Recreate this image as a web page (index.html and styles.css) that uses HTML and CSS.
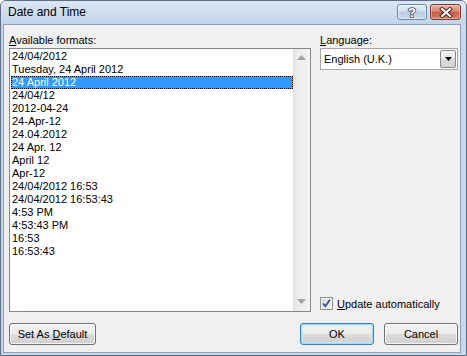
FILE: index.html
```html
<!DOCTYPE html>
<html lang="en">
  <head>
    <meta charset="UTF-8" />
    <title>Date and Time</title>
    <link rel="stylesheet" href="styles.css">
  </head>
  <body>
    <div class="window">
      <div class="titlebar">
        <span class="title">Date and Time</span>
        <div class="caption-buttons">
          <div class="cap-btn help">
            <svg width="12" height="14" viewBox="0 0 12 14">
              <text x="6" y="11.5" text-anchor="middle" class="help-glyph">?</text>
            </svg>
          </div>
          <div class="cap-btn close">
            <svg width="14" height="11" viewBox="0 0 14 11">
              <path d="M3 2 L11 9 M11 2 L3 9" stroke="#4b2a25" stroke-width="4" stroke-linecap="square" />
              <path d="M3 2 L11 9 M11 2 L3 9" stroke="#fff" stroke-width="2" stroke-linecap="square" />
            </svg>
          </div>
        </div>
      </div>

      <div class="client">
        <div class="main">
          <div class="formats">
            <div class="field-label"><u>A</u>vailable formats:</div>
            <div class="listbox">
              <ul class="items">
                <li>24/04/2012</li>
                <li>Tuesday, 24 April 2012</li>
                <li class="selected">24 April 2012</li>
                <li>24/04/12</li>
                <li>2012-04-24</li>
                <li>24-Apr-12</li>
                <li>24.04.2012</li>
                <li>24 Apr. 12</li>
                <li>April 12</li>
                <li>Apr-12</li>
                <li>24/04/2012 16:53</li>
                <li>24/04/2012 16:53:43</li>
                <li>4:53 PM</li>
                <li>4:53:43 PM</li>
                <li>16:53</li>
                <li>16:53:43</li>
              </ul>
              <div class="scrollbar">
                <svg width="9" height="5" viewBox="0 0 9 5"><path d="M0 5 L4.5 0 L9 5 Z" fill="#a3a3a3" /></svg>
                <svg width="9" height="5" viewBox="0 0 9 5"><path d="M0 0 L4.5 5 L9 0 Z" fill="#a3a3a3" /></svg>
              </div>
            </div>
          </div>

          <div class="side">
            <div class="field-label"><u>L</u>anguage:</div>
            <div class="combo">
              <span class="combo-text">English (U.K.)</span>
              <span class="drop">
                <svg width="7" height="4" viewBox="0 0 7 4"><path d="M0 0 L7 0 L3.5 4 Z" fill="#000" /></svg>
              </span>
            </div>
            <div class="check">
              <span class="box">
                <svg width="11" height="11" viewBox="0 0 11 11">
                  <path d="M2 5.5 L4.3 8.2 L9 1.8" fill="none" stroke="#3c5389" stroke-width="1.8" />
                </svg>
              </span>
              <span><u>U</u>pdate automatically</span>
            </div>
          </div>
        </div>

        <div class="buttons">
          <button class="btn wide">Set As <u>D</u>efault</button>
          <div class="right-buttons">
            <button class="btn default">OK</button>
            <button class="btn">Cancel</button>
          </div>
        </div>
      </div>
    </div>
  </body>
</html>
```

FILE: styles.css
```css
body {
  margin: 0;
  background: #fff;
  font-family: 'Liberation Sans', Arial, sans-serif;
  font-size: 11px;
  color: #000;
}
.window {
  width: 467px;
  height: 356px;
  box-sizing: border-box;
  border: 1px solid #5e6f86;
  border-radius: 6px 6px 0 0;
  background: #c8d8ec;
  display: flex;
  flex-direction: column;
  overflow: hidden;
}
.titlebar {
  height: 23px;
  flex: none;
  display: flex;
  align-items: flex-start;
  padding-left: 7px;
  background: linear-gradient(#dbe6f3, #c3d4ea);
}
.title {
  font-size: 12px;
  line-height: 23px;
  color: #000;
}
.caption-buttons {
  margin-left: auto;
  margin-right: 5px;
  margin-top: 3px;
  display: flex;
  gap: 3px;
}
.cap-btn {
  height: 16px;
  box-sizing: border-box;
  border-radius: 3px;
  display: flex;
  align-items: center;
  justify-content: center;
}
.help {
  width: 30px;
  border: 1px solid #6f86a5;
  background: linear-gradient(#e8eff8, #cfdcee 45%, #b7cbe4 50%, #c8d9ee);
  box-shadow: inset 0 0 0 1px rgba(255, 255, 255, 0.5);
}
.help-glyph {
  font-family: 'Liberation Sans', Arial, sans-serif;
  font-weight: bold;
  font-size: 13px;
  fill: #fff;
  stroke: #3d4f68;
  stroke-width: 1.6;
  paint-order: stroke;
}
.close {
  width: 31px;
  border: 1px solid #7a3a31;
  background: linear-gradient(#eab0a4, #d98876 45%, #c55a44 50%, #d6826a);
  box-shadow: inset 0 0 0 1px rgba(255, 255, 255, 0.35);
}
.client {
  flex: 1;
  margin: 0 5px 2px 2px;
  border: 1px solid #8ba0bc;
  background: #f0f0f0;
  padding: 8px 2px 0 5px;
}
.main {
  display: flex;
  gap: 9px;
}
.field-label {
  line-height: 15px;
  height: 15px;
}
.formats {
  width: 302px;
}
.listbox {
  height: 264px;
  box-sizing: border-box;
  border: 1px solid #828790;
  background: #fff;
  display: flex;
}
.items {
  flex: 1;
  list-style: none;
  margin: 0;
  padding: 1px 0 0 1px;
}
.items li {
  height: 13px;
  line-height: 13px;
  padding-left: 1px;
  white-space: nowrap;
}
.items li.selected {
  box-sizing: border-box;
  border: 1px dotted #000;
  padding-left: 0;
  line-height: 11px;
  color: #fff;
  background: linear-gradient(#3399ff, #3399ff) padding-box, #d9821d;
}
.scrollbar {
  width: 17px;
  display: flex;
  flex-direction: column;
  align-items: center;
  justify-content: space-between;
  padding: 6px 0 7px;
  box-sizing: border-box;
  background: linear-gradient(to right, #e3e3e3, #ececec 25%, #f0f0f0 80%, #f6f6f6);
}
.side {
  width: 138px;
  display: flex;
  flex-direction: column;
}
.combo {
  height: 22px;
  box-sizing: border-box;
  border: 1px solid #a6a6a6;
  background: #fff;
  display: flex;
  align-items: center;
  padding-left: 3px;
}
.combo-text {
  flex: 1;
}
.drop {
  width: 16px;
  height: 18px;
  box-sizing: border-box;
  margin-right: 1px;
  border: 1px solid #8a8a8a;
  border-radius: 2px;
  background: linear-gradient(#f3f3f3, #e9e9e9 50%, #dcdcdc 50%, #d3d3d3);
  display: flex;
  align-items: center;
  justify-content: center;
}
.check {
  margin-top: auto;
  margin-bottom: 2px;
  height: 13px;
  display: flex;
  align-items: center;
  gap: 4px;
}
.box {
  width: 13px;
  height: 13px;
  box-sizing: border-box;
  border: 1px solid #8e8f8f;
  background: linear-gradient(135deg, #d0d4da, #f7f7f7);
  box-shadow: inset 0 0 0 1px #f4f4f4;
  display: flex;
  align-items: center;
  justify-content: center;
}
.buttons {
  margin-top: 11px;
  display: flex;
  justify-content: space-between;
}
.right-buttons {
  display: flex;
  gap: 10px;
}
.btn {
  width: 74px;
  height: 22px;
  padding: 0;
  font-family: 'Liberation Sans', Arial, sans-serif;
  font-size: 11px;
  color: #000;
  border: 1px solid #707070;
  border-radius: 3px;
  background: linear-gradient(#f2f2f2, #ebebeb 50%, #dddddd 50%, #cfcfcf);
  box-shadow: inset 0 0 0 1px rgba(255, 255, 255, 0.75);
}
.btn.wide {
  width: 87px;
}
.btn.default {
  border-color: #3c7fb1;
  box-shadow: inset 0 0 0 1px #9edcf7, inset 0 0 0 2px rgba(200, 236, 252, 0.7);
}
```
